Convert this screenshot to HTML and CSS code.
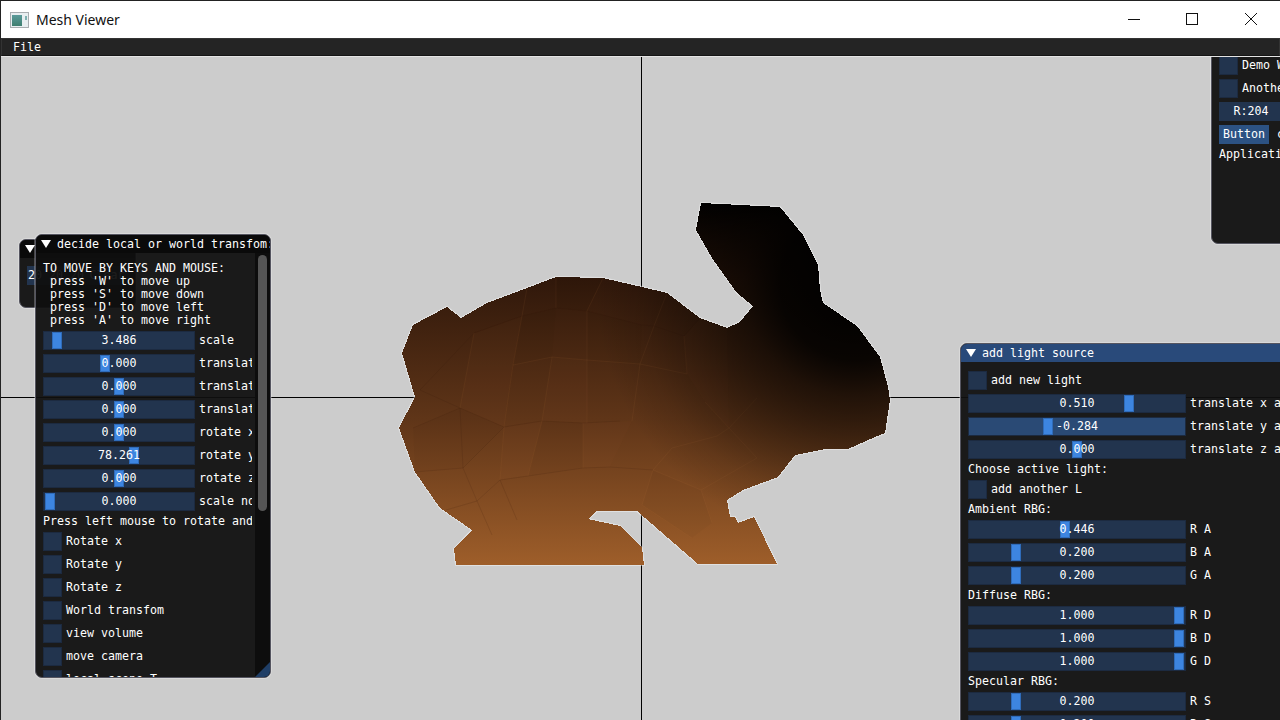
FILE: index.html
```html
<!DOCTYPE html>
<html lang="en">
<head>
<meta charset="utf-8">
<title>Mesh Viewer</title>
<link rel="stylesheet" href="styles.css">
</head>
<body>
<div class="app">
  <header class="titlebar">
    <svg class="appicon" width="20" height="16" viewBox="0 0 20 16"><defs><linearGradient id="ic" x1="0" y1="0" x2="0" y2="1"><stop offset="0" stop-color="#5a9a9a"/><stop offset="1" stop-color="#3f7f6f"/></linearGradient></defs><rect x=".5" y=".5" width="18" height="15" fill="#e8eef0" stroke="#a9adb0"/><rect x="2" y="3" width="10" height="11" fill="url(#ic)"/><rect x="15" y="4" width="2" height="4" fill="#7fb0b0"/></svg>
    <span class="apptitle">Mesh Viewer</span>
    <div class="caption">
      <svg width="58" height="38" viewBox="0 0 58 38"><path d="M22 19.5H34" stroke="#111" fill="none"/></svg>
      <svg width="58" height="38" viewBox="0 0 58 38"><rect x="22.5" y="13.5" width="11" height="11" stroke="#111" fill="none"/></svg>
      <svg width="58" height="38" viewBox="0 0 58 38"><path d="M23 13L35 25M35 13L23 25" stroke="#111" fill="none"/></svg>
    </div>
  </header>
  <nav class="menubar"><span class="menuitem">File</span></nav>
  <main class="canvas">
    <svg class="scene" width="1280" height="664" viewBox="0 56 1280 664">
      <defs>
        <linearGradient id="base" gradientUnits="userSpaceOnUse" x1="0" y1="200" x2="0" y2="565">
          <stop offset="0" stop-color="#000"/>
          <stop offset=".21" stop-color="#2f170a"/>
          <stop offset=".6" stop-color="#5f3518"/>
          <stop offset="1" stop-color="#9e5e2a"/>
        </linearGradient>
        <radialGradient id="shade" gradientUnits="userSpaceOnUse" cx="855" cy="285" r="300">
          <stop offset="0" stop-color="#000" stop-opacity="1"/>
          <stop offset=".25" stop-color="#000" stop-opacity=".88"/>
          <stop offset=".37" stop-color="#000" stop-opacity=".62"/>
          <stop offset=".55" stop-color="#000" stop-opacity=".36"/>
          <stop offset=".73" stop-color="#000" stop-opacity=".12"/>
          <stop offset=".87" stop-color="#000" stop-opacity="0"/>
        </radialGradient>
      </defs>
      <rect class="axis" x="641" y="56" width="1" height="664"/>
      <rect class="axis" x="0" y="397" width="1280" height="1"/>
      <polygon class="halo" points="402,353 413,325 447,307 461,318 487,303 527,288 556,277 603,278 642,287 667,293 700,318 727,328 740,322 753,306 737,293 712,258 696,230 701,203 780,207 803,235 818,265 820,290 823,303 857,326 880,357 888,387 890,400 885,433 875,437 848,449 825,449 795,455 778,477 743,490 727,500 730,517 735,517 738,523 754,517 777,564 698,564 637,511 597,511 588,519 620,526 642,548 644,565 456,565 454,549 472,530 440,508 415,472 399,428 415,397"/>
      <polygon class="body" fill="url(#base)" points="402,353 413,325 447,307 461,318 487,303 527,288 556,277 603,278 642,287 667,293 700,318 727,328 740,322 753,306 737,293 712,258 696,230 701,203 780,207 803,235 818,265 820,290 823,303 857,326 880,357 888,387 890,400 885,433 875,437 848,449 825,449 795,455 778,477 743,490 727,500 730,517 735,517 738,523 754,517 777,564 698,564 637,511 597,511 588,519 620,526 642,548 644,565 456,565 454,549 472,530 440,508 415,472 399,428 415,397"/>
      <path class="tone-dark" d="M522,316L556,308L552,357L513,365ZM587,311L642,325L640,364L587,360ZM460,408L504,427L463,468ZM542,421L583,423L583,468L528,476ZM653,470L701,490L712,523L692,538L642,505ZM413,428L460,408L463,468L415,472ZM556,277L603,278L587,311L556,308Z"/>
      <path class="tone-light" d="M474,333L522,316L513,365L504,427L460,408ZM552,357L587,360L587,423L542,421ZM504,427L542,421L528,476L500,480ZM583,423L632,421L610,467L583,468ZM684,336L700,318L727,328L729,428L705,402L687,374Z"/>
      <path class="facet-dark" d="M413,428L460,408L504,427L542,421L583,423L620,421M460,408L463,468M504,427L463,468M415,472L463,468M500,480L528,476L583,468L610,467L653,470M463,468L477,501L500,480M477,501L446,510M477,501L492,535M500,480L517,520M474,333L420,390L460,408M522,316L556,308L587,311L642,325L654,326L684,336L700,318M474,333L522,316"/>
      <path class="facet-light" d="M556,277L556,308M603,278L587,311M527,288L522,316M522,316L513,365L552,357L587,360L640,364M474,333L460,408M513,365L504,427M552,357L542,421M587,311L587,423M583,423L583,468M542,421L528,476M504,427L500,480M654,326L640,364L632,421M684,336L687,374L640,364M667,293L654,326M705,402L729,428L757,398M729,428L717,436L672,448L653,470L701,490L757,458L729,428M653,470L642,505L692,538M701,490L712,523"/>
      <polygon class="body" fill="url(#shade)" points="402,353 413,325 447,307 461,318 487,303 527,288 556,277 603,278 642,287 667,293 700,318 727,328 740,322 753,306 737,293 712,258 696,230 701,203 780,207 803,235 818,265 820,290 823,303 857,326 880,357 888,387 890,400 885,433 875,437 848,449 825,449 795,455 778,477 743,490 727,500 730,517 735,517 738,523 754,517 777,564 698,564 637,511 597,511 588,519 620,526 642,548 644,565 456,565 454,549 472,530 440,508 415,472 399,428 415,397"/>
    </svg>

    <section class="win win-back">
      <div class="wtitle wtitle-back"><span class="tri"></span></div>
      <div class="back-row">
        <div class="frame back-frame">20 20 20</div>
        <div class="frame back-btn">Clear</div>
      </div>
    </section>

    <section class="win win-top">
      <div class="stack">
        <div class="row"><span class="check"></span><span class="lbl">Demo Window</span></div>
        <div class="row"><span class="check"></span><span class="lbl">Another Window</span></div>
        <div class="row"><div class="frame color-frame">R:204</div></div>
        <div class="row row-wide"><span class="button">Button</span><span class="lbl">counter = 0</span></div>
        <div class="txt">Application average 16.667 ms/frame</div>
      </div>
    </section>

    <section class="win win-left">
      <div class="wtitle wtitle-dark"><span class="tri"></span><span class="wname">decide local or world transfom:</span></div>
      <div class="wbody">
        <div class="content">
          <div class="stack">
            <div class="txt block">TO MOVE BY KEYS AND MOUSE:
 press 'W' to move up
 press 'S' to move down
 press 'D' to move left
 press 'A' to move right</div>
            <div class="row"><div class="slider sl-s"><i class="grab" style="left:8px"></i><span class="val">3.486</span></div><span class="lbl">scale</span></div>
            <div class="row"><div class="slider sl-s"><i class="grab" style="left:56px"></i><span class="val">0.000</span></div><span class="lbl">translate x</span></div>
            <div class="row"><div class="slider sl-s"><i class="grab" style="left:70px"></i><span class="val">0.000</span></div><span class="lbl">translate y</span></div>
            <div class="row"><div class="slider sl-s"><i class="grab" style="left:70px"></i><span class="val">0.000</span></div><span class="lbl">translate z</span></div>
            <div class="row"><div class="slider sl-s"><i class="grab" style="left:70px"></i><span class="val">0.000</span></div><span class="lbl">rotate x</span></div>
            <div class="row"><div class="slider sl-s"><i class="grab" style="left:85px"></i><span class="val">78.261</span></div><span class="lbl">rotate y</span></div>
            <div class="row"><div class="slider sl-s"><i class="grab" style="left:70px"></i><span class="val">0.000</span></div><span class="lbl">rotate z</span></div>
            <div class="row"><div class="slider sl-s"><i class="grab" style="left:1px"></i><span class="val">0.000</span></div><span class="lbl">scale normals</span></div>
            <div class="txt">Press left mouse to rotate and move</div>
            <div class="row"><span class="check"></span><span class="lbl">Rotate x</span></div>
            <div class="row"><span class="check"></span><span class="lbl">Rotate y</span></div>
            <div class="row"><span class="check"></span><span class="lbl">Rotate z</span></div>
            <div class="row"><span class="check"></span><span class="lbl">World transfom</span></div>
            <div class="row"><span class="check"></span><span class="lbl">view volume</span></div>
            <div class="row"><span class="check"></span><span class="lbl">move camera</span></div>
            <div class="row"><span class="check"></span><span class="lbl">local scene T</span></div>
          </div>
        </div>
        <div class="scrollbar"><span class="scrollgrab"></span></div>
      </div>
      <span class="grip"></span>
    </section>

    <section class="win win-right">
      <div class="wtitle wtitle-blue"><span class="tri"></span><span class="wname">add light source</span></div>
      <div class="content content-r">
        <div class="stack">
          <div class="row"><span class="check"></span><span class="lbl">add new light</span></div>
          <div class="row"><div class="slider sl-l"><i class="grab" style="left:155px"></i><span class="val">0.510</span></div><span class="lbl">translate x axis</span></div>
          <div class="row"><div class="slider sl-l hot"><i class="grab" style="left:74px"></i><span class="val">-0.284</span></div><span class="lbl">translate y axis</span></div>
          <div class="row"><div class="slider sl-l"><i class="grab" style="left:103px"></i><span class="val">0.000</span></div><span class="lbl">translate z axis</span></div>
          <div class="txt">Choose active light:</div>
          <div class="row"><span class="check"></span><span class="lbl">add another L</span></div>
          <div class="txt">Ambient RBG:</div>
          <div class="row"><div class="slider sl-l"><i class="grab" style="left:91px"></i><span class="val">0.446</span></div><span class="lbl">R A</span></div>
          <div class="row"><div class="slider sl-l"><i class="grab" style="left:42px"></i><span class="val">0.200</span></div><span class="lbl">B A</span></div>
          <div class="row"><div class="slider sl-l"><i class="grab" style="left:42px"></i><span class="val">0.200</span></div><span class="lbl">G A</span></div>
          <div class="txt">Diffuse RBG:</div>
          <div class="row"><div class="slider sl-l"><i class="grab" style="left:205px"></i><span class="val">1.000</span></div><span class="lbl">R D</span></div>
          <div class="row"><div class="slider sl-l"><i class="grab" style="left:205px"></i><span class="val">1.000</span></div><span class="lbl">B D</span></div>
          <div class="row"><div class="slider sl-l"><i class="grab" style="left:205px"></i><span class="val">1.000</span></div><span class="lbl">G D</span></div>
          <div class="txt">Specular RBG:</div>
          <div class="row"><div class="slider sl-l"><i class="grab" style="left:42px"></i><span class="val">0.200</span></div><span class="lbl">R S</span></div>
          <div class="row"><div class="slider sl-l"><i class="grab" style="left:42px"></i><span class="val">0.200</span></div><span class="lbl">B S</span></div>
        </div>
      </div>
    </section>
  </main>
</div>
</body>
</html>
```
FILE: styles.css
```css
* { box-sizing: border-box; }
html, body { margin: 0; padding: 0; background: #ccc; }
.app {
  width: 1280px; height: 720px; overflow: hidden;
  display: flex; flex-direction: column;
  border-left: 1px solid #222;
  font: 11.63px/13px "DejaVu Sans Mono", monospace;
  color: #fff;
}
.titlebar {
  flex: 0 0 38px; display: flex; align-items: center;
  background: #fff; border-top: 1px solid #222; color: #111;
  padding-left: 9px;
}
.appicon { flex: none; }
.apptitle { font: 14px "Noto Sans", sans-serif; margin-left: 6px; }
.caption { margin-left: auto; display: flex; margin-top: -1px; }
.caption svg { display: block; }
.menubar {
  flex: 0 0 18px; background: #242424;
  border: 1px solid #333; border-bottom-color: #151515;
  padding-left: 11px; display: flex; align-items: center;
}
.canvas { flex: 1; position: relative; overflow: hidden; background: #ccc; border-top: 1px solid #e4e4e4; margin-left: -1px; }
.scene { position: absolute; left: 0; top: -1px; display: block; }
.axis { fill: #000; }
.halo { fill: none; stroke: #fff; stroke-opacity: .4; stroke-width: 2; stroke-linejoin: round; }
.body { shape-rendering: crispEdges; }
.facet-dark, .facet-light { fill: none; stroke-width: 1; }
.facet-dark { stroke: #2a1405; stroke-opacity: .12; }
.facet-light { stroke: #b87a40; stroke-opacity: .09; }
.tone-dark { fill: #000; fill-opacity: .025; }
.tone-light { fill: #c8894a; fill-opacity: .025; }

.win {
  position: absolute; display: flex; flex-direction: column;
  background: rgba(15,15,15,.94);
  border: 1px solid #555560;
  border-radius: 7px; overflow: hidden;
  box-shadow: 0 0 0 1px rgba(255,255,255,.25);
}
.win-back { left: 19px; top: 182px; width: 117px; height: 69px; }
.win-left { left: 35px; top: 177px; width: 236px; height: 444px; }
.win-right { left: 960px; top: 286px; width: 420px; height: 460px; }
.win-top { left: 1211px; top: -20px; width: 200px; height: 207px; padding: 18px 0 0 7px; border-radius: 0 0 0 7px; }

.wtitle { flex: 0 0 18px; display: flex; align-items: center; padding: 0 0 0 5px; gap: 6px; white-space: nowrap; overflow: hidden; }
.wtitle-dark, .wtitle-back { background: #0a0a0a; }
.wtitle-blue { background: #294a7a; }
.tri { flex: none; width: 0; height: 0; border-left: 5px solid transparent; border-right: 5px solid transparent; border-top: 8px solid #fff; }
.wname { display: block; }

.back-row { display: flex; gap: 4px; padding: 8px 0 0 7px; }
.frame { background: #22344e; height: 19px; line-height: 19px; text-align: center; white-space: nowrap; }
.back-frame { width: 53px; text-align: left; padding-left: 1px; }
.back-btn { width: 46px; }

.wbody { flex: 1; min-height: 0; display: flex; }
.content { flex: 1; min-width: 0; overflow: hidden; padding: 9px 0 0 7px; margin-right: 3px; }
.content-r { margin: 0; }
.stack { display: flex; flex-direction: column; gap: 4px; }
.txt { height: 13px; white-space: nowrap; }
.block { height: 65px; white-space: pre; }
.row { display: flex; align-items: center; gap: 4px; height: 19px; white-space: nowrap; }
.row-wide { gap: 8px; }
.check { flex: none; width: 19px; height: 19px; background: #22344e; border: 1px solid #1c2a40; }
.lbl { flex: none; }
.slider { flex: none; position: relative; height: 19px; background: #22344e; border: 1px solid #1c2a40; display: flex; align-items: center; justify-content: center; }
.sl-s { width: 152px; }
.sl-l { width: 218px; }
.hot { background: #2a4a75; }
.grab { position: absolute; top: 0; width: 10px; height: 17px; background: #3d85e0; border: 1px solid #2f6cba; }
.val { position: relative; }
.color-frame { width: 64px; }
.button { flex: none; width: 50px; height: 19px; line-height: 19px; text-align: center; background: #2c5283; }

.scrollbar { flex: 0 0 15px; background: #0d0d0d; padding: 2px 3px 0; }
.scrollgrab { display: block; width: 9px; height: 256px; background: #555; border-radius: 5px; }
.grip { position: absolute; right: 0; bottom: 0; width: 15px; height: 15px; background: #1f3e66; clip-path: polygon(100% 0, 100% 100%, 0 100%); }
```
